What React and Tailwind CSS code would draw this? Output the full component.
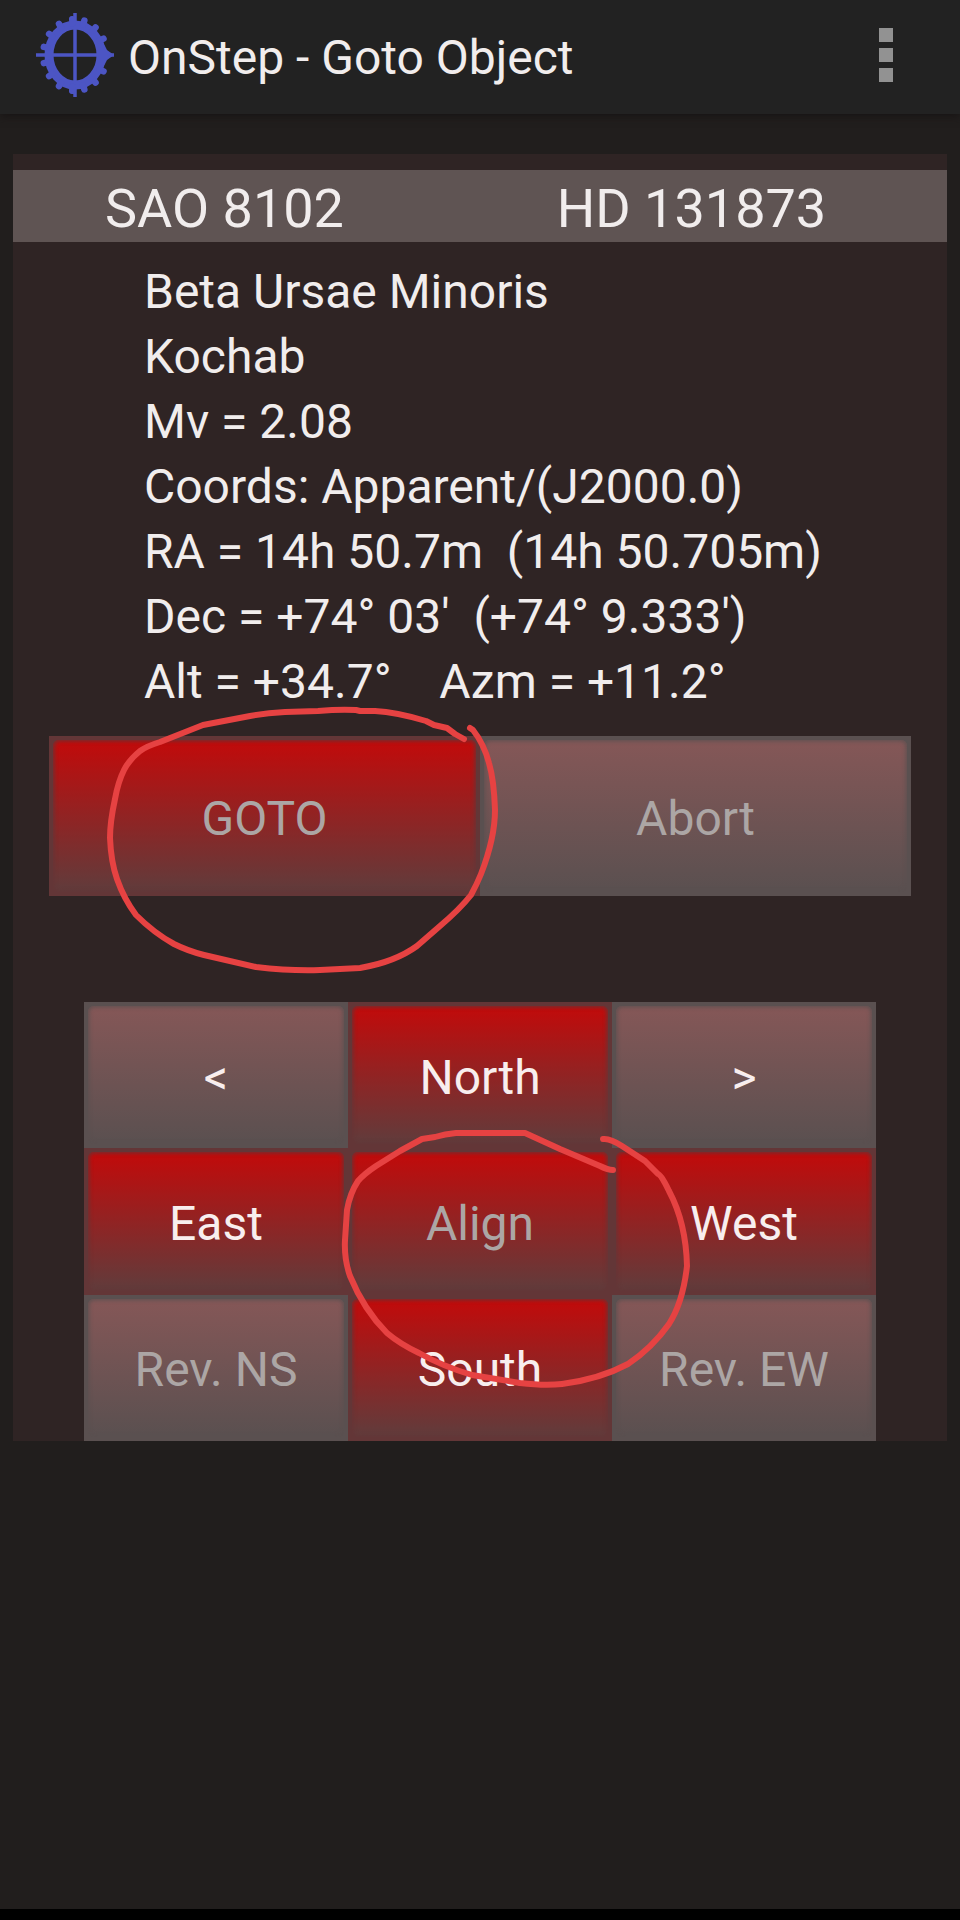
const details = [
  'Beta Ursae Minoris',
  'Kochab',
  'Mv = 2.08',
  'Coords: Apparent/(J2000.0)',
  'RA = 14h 50.7m  (14h 50.705m)',
  "Dec = +74° 03'  (+74° 9.333')",
  'Alt = +34.7°    Azm = +11.2°',
];

const pad = [
  { label: '<', tone: 'gray' },
  { label: 'North', tone: 'red' },
  { label: '>', tone: 'gray' },
  { label: 'East', tone: 'red' },
  { label: 'Align', tone: 'red', disabled: true },
  { label: 'West', tone: 'red' },
  { label: 'Rev. NS', tone: 'gray', disabled: true },
  { label: 'South', tone: 'red' },
  { label: 'Rev. EW', tone: 'gray', disabled: true },
];

const bezels = {
  red: 'bg-[#633637]',
  gray: 'bg-[#5a5050]',
};

const faces = {
  red: 'from-[#c20a0a] to-[#603c3c] shadow-[inset_0_0_4px_1px_#653536]',
  gray: 'from-[#855757] to-[#5a5050] shadow-[inset_0_0_4px_1px_#5a5050]',
};

// angles of the gear teeth, clockwise from the top
const teeth = [17, 40, 63, 117, 140, 163, 185, 210, 234, 257, 283, 306, 330, 355];

function GearIcon() {
  return (
    <svg viewBox="0 0 80 88" className="w-20 h-[88px]" aria-hidden="true">
      <g fill="none" stroke="#4c55c4">
        <ellipse cx="39" cy="42" rx="26" ry="30" strokeWidth="9" />
        <path d="M39 -1V84M0 42H78" strokeWidth="3.5" />
      </g>
      <path d="M67 29L71 37L78 42L71 47L67 55Z" fill="#4c55c4" />
      {teeth.map((deg) => {
        const a = (deg * Math.PI) / 180;
        const x = Math.sin(a);
        const y = -Math.cos(a);
        return (
          <line
            key={deg}
            x1={39 + 28 * x}
            y1={42 + 32 * y}
            x2={39 + 32 * x}
            y2={42 + 36 * y}
            stroke="#4c55c4"
            strokeWidth="6.5"
            strokeLinecap="round"
          />
        );
      })}
    </svg>
  );
}

function PadButton({ label, tone, disabled }) {
  return (
    <button disabled={disabled} className={`p-1 ${bezels[tone]} ${disabled ? 'text-[#aca6a5]' : 'text-[#f8eeee]'}`}>
      <span className={`flex size-full items-center justify-center pt-1 rounded-md bg-linear-to-b/srgb ${faces[tone]}`}>
        {label}
      </span>
    </button>
  );
}

// hand-drawn circles round GOTO and Align
function Marks() {
  return (
    <svg
      viewBox="13 154 934 1287"
      className="absolute inset-0 w-full h-full pointer-events-none"
      fill="none"
      stroke="#e64242"
      strokeWidth="6"
      strokeLinecap="round"
      strokeLinejoin="round"
      aria-hidden="true"
    >
      <path d="M464 739L455 734L447 728L434 725L426 721Q396 712 375 711L360 711L356 710Q340 709 318 711L285 712Q266 713 250 716L203 725L160 742Q147 746 140 751Q129 760 124 770Q118 782 115 799Q110 822 110 838Q111 862 117 879Q124 899 136 915Q154 933 174 944Q188 951 204 955L256 967Q290 971 320 970L360 968Q395 962 417 946L440 926Q460 909 471 895Q477 884 481 874Q495 838 495 810Q494 780 489 763Q484 744 473 730L470 728" />
      <path d="M613 1170Q608 1170 600 1166L560 1149L525 1133L516 1133H456Q445 1134 435 1137L422 1139L400 1151L376 1166Q364 1174 358 1181Q350 1193 347 1210L345 1240Q344 1259 350 1276Q364 1310 387 1333Q400 1344 419 1353Q442 1366 472 1375L520 1383Q545 1386 562 1384Q600 1379 628 1364Q652 1348 669 1324Q683 1302 687 1266Q686 1223 669 1191Q661 1174 658 1174L645 1161L622 1146Q610 1138 603 1139" />
    </svg>
  );
}

export default function App() {
  return (
    <div className="min-h-screen flex flex-col bg-[#211e1d] font-[Roboto,sans-serif] text-[48px] leading-[65px] text-[#f1eded]">
      <header className="flex items-center h-[114px] pl-9 pr-[51px] bg-[#222222] shadow-[0_2px_8px_#171414]">
        <GearIcon />
        <h1 className="flex-1 pl-3">OnStep - Goto Object</h1>
        <button aria-label="More options" className="flex flex-col gap-[6px] px-4 pt-3 pb-4">
          <span className="size-[14px] bg-[#929292]" />
          <span className="size-[14px] bg-[#929292]" />
          <span className="size-[14px] bg-[#929292]" />
        </button>
      </header>

      <main className="relative mx-[13px] mt-10 pt-4 bg-[#2f2424]">
        <div className="grid grid-cols-2 h-[72px] items-center pt-1 bg-[#5f5453] text-center text-[54px]">
          <h2 className="pr-11">SAO 8102</h2>
          <h2 className="pr-11">HD 131873</h2>
        </div>

        <div className="mt-[17px] pl-[131px] whitespace-pre">
          {details.map((line) => (
            <p key={line}>{line}</p>
          ))}
        </div>

        <div className="grid grid-cols-2 h-40 mt-[22px] mx-9">
          <PadButton label="GOTO" tone="red" disabled />
          <PadButton label="Abort" tone="gray" disabled />
        </div>

        <div className="grid grid-cols-3 grid-rows-3 h-[439px] mt-[106px] mx-[71px]">
          {pad.map((b) => (
            <PadButton key={b.label} {...b} />
          ))}
        </div>

        <Marks />
      </main>

      <footer className="mt-auto h-[11px] bg-black" />
    </div>
  );
}
